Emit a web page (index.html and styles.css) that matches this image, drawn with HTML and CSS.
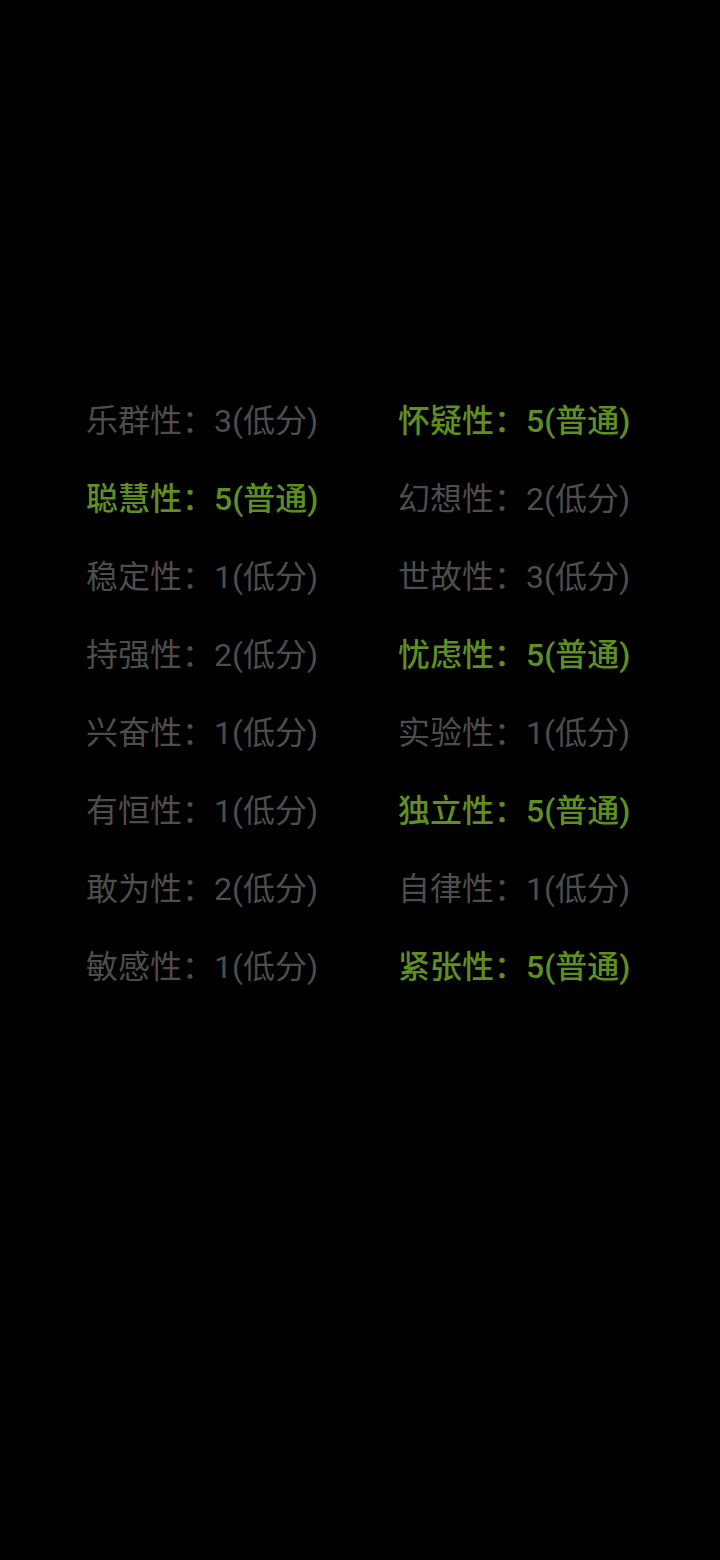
FILE: index.html
```html
<!DOCTYPE html>
<html lang="zh-CN">
<head>
    <meta charset="UTF-8">
    <meta name="viewport" content="width=device-width, initial-scale=1.0">
    <title>人格因素</title>
    <link rel="stylesheet" href="styles.css">
</head>
<body>
    <div class="factor-grid">
        <div class="factor">乐群性：3(低分)</div>
        <div class="factor normal">怀疑性：5(普通)</div>
        <div class="factor normal">聪慧性：5(普通)</div>
        <div class="factor">幻想性：2(低分)</div>
        <div class="factor">稳定性：1(低分)</div>
        <div class="factor">世故性：3(低分)</div>
        <div class="factor">持强性：2(低分)</div>
        <div class="factor normal">忧虑性：5(普通)</div>
        <div class="factor">兴奋性：1(低分)</div>
        <div class="factor">实验性：1(低分)</div>
        <div class="factor">有恒性：1(低分)</div>
        <div class="factor normal">独立性：5(普通)</div>
        <div class="factor">敢为性：2(低分)</div>
        <div class="factor">自律性：1(低分)</div>
        <div class="factor">敏感性：1(低分)</div>
        <div class="factor normal">紧张性：5(普通)</div>
    </div>
</body>
</html>
```

FILE: styles.css
```css
body {
    margin: 0;
    background: #000;
    font-family: Roboto, "Noto Sans CJK SC", sans-serif;
    min-height: 1560px;
}
.factor-grid {
    display: grid;
    grid-template-columns: 312px 312px;
    padding: 382px 0 0 86px;
}
.factor {
    font-size: 32px;
    line-height: 78px;
    height: 78px;
    color: #4d4d4d;
    white-space: nowrap;
}
.factor.normal {
    color: #5e8f1f;
    font-weight: 500;
}
```
